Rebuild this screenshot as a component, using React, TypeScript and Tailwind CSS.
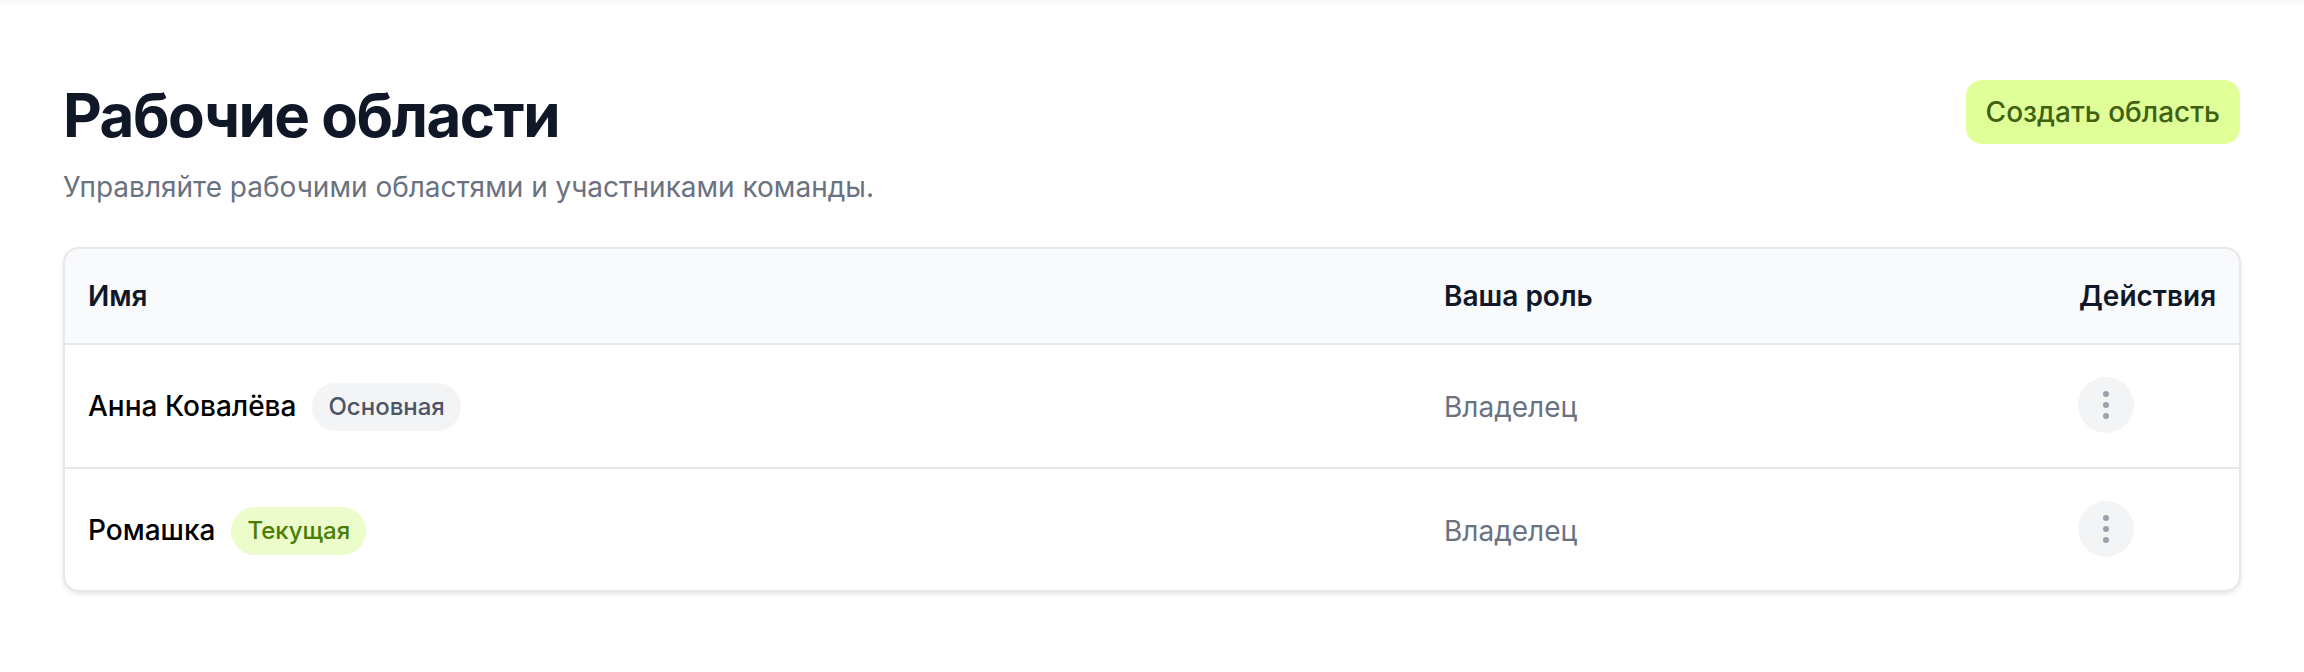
const rows = [
  {
    name: "Анна Ковалёва",
    badge: "Основная",
    badgeClass: "bg-gray-100 text-gray-600",
    role: "Владелец",
  },
  {
    name: "Ромашка",
    badge: "Текущая",
    badgeClass: "bg-lime-100 text-lime-700",
    role: "Владелец",
  },
];

function DotsIcon() {
  return (
    <svg viewBox="0 0 32 32" className="h-8 w-8 fill-gray-400">
      <circle cx="16" cy="5" r="3" />
      <circle cx="16" cy="16" r="3" />
      <circle cx="16" cy="27" r="3" />
    </svg>
  );
}

export default function App() {
  return (
    <div className="min-h-[672px] bg-white font-['Inter',sans-serif]">
      <div className="h-1 bg-gray-50" />

      <main className="px-[63px] pt-[76px]">
        <div className="flex items-start justify-between">
          <div>
            <h1 className="text-[60px] leading-[71px] font-[750] tracking-[-1.5px] text-gray-900">
              Рабочие области
            </h1>
            <p className="mt-4 text-[28px] leading-10 text-gray-500">
              Управляйте рабочими областями и участниками команды.
            </p>
          </div>
          <button className="mr-px h-16 rounded-2xl bg-[#e0ff99] px-5 text-[28px] leading-10 font-[550] text-[#3f6212]">
            Создать область
          </button>
        </div>

        <div className="mt-10 overflow-hidden rounded-2xl border-2 border-gray-200 shadow-[0_2px_4px_rgba(0,0,0,0.1)]">
          <table className="w-full table-fixed">
            <colgroup>
              <col className="w-[1355px]" />
              <col />
              <col className="w-[184px]" />
            </colgroup>
            <thead className="bg-gray-50">
              <tr className="h-[95px] border-b-2 border-gray-200 text-left text-[28px] text-gray-900">
                <th className="pr-6 pl-[23px] font-semibold">Имя</th>
                <th className="px-6 font-semibold">Ваша роль</th>
                <th className="px-6 font-semibold">Действия</th>
              </tr>
            </thead>
            <tbody>
              {rows.map((row) => (
                <tr key={row.name} className="h-[124px] border-b-2 border-gray-200 last:h-[122px] last:border-b-0">
                  <td className="pr-6 pl-[23px]">
                    <div className="flex items-center gap-4">
                      <span className="text-[28px] font-medium text-black">{row.name}</span>
                      <span className={`mt-0.5 rounded-full px-4 py-2 text-2xl leading-8 font-medium ${row.badgeClass}`}>
                        {row.badge}
                      </span>
                    </div>
                  </td>
                  <td className="px-6 pt-0.5 text-[28px] text-gray-500">{row.role}</td>
                  <td className="pr-6 pl-[23px]">
                    <button className="-mt-0.5 flex h-14 w-14 items-center justify-center rounded-full bg-gray-100">
                      <DotsIcon />
                    </button>
                  </td>
                </tr>
              ))}
            </tbody>
          </table>
        </div>
      </main>
    </div>
  );
}
